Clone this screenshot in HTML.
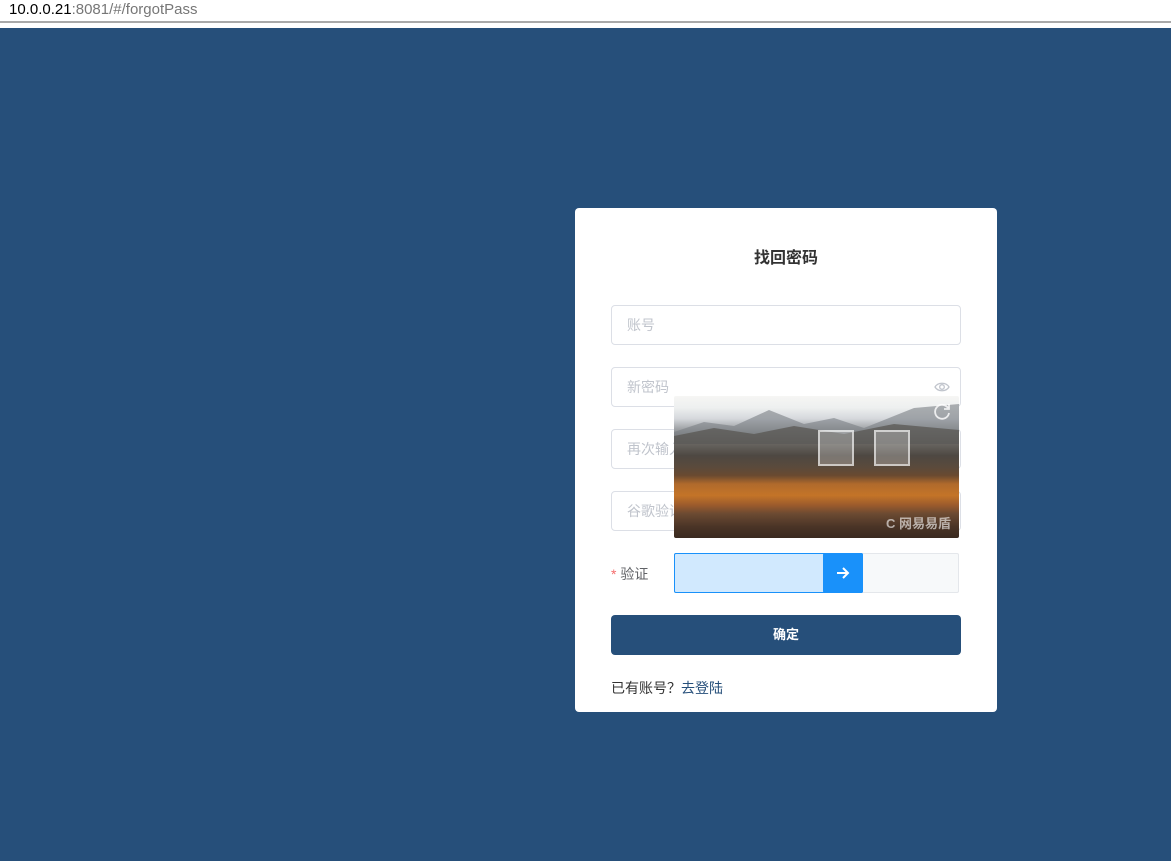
<!DOCTYPE html>
<html><head><meta charset="utf-8"><style>
*{box-sizing:border-box;margin:0;padding:0}
body{width:1171px;height:861px;overflow:hidden;background:#264f7a;font-family:"Liberation Sans","Noto Sans CJK SC",sans-serif;position:relative}
.bar{position:absolute;left:0;top:0;width:1171px;height:22px;background:#fff;border-bottom:1px solid #a9a9a9;font-size:15px;line-height:19px;padding-left:9px;color:#777}
.bar b{font-weight:normal;color:#000}
.bar2{position:absolute;top:22px;left:0;width:1171px;height:6px;background:#fff;border-top:1px solid #a9a9a9}
.card{position:absolute;left:575px;top:208px;width:422px;height:504px;background:#fff;border-radius:4px}
.title{position:absolute;top:36px;left:0;width:100%;text-align:center;font-size:16px;font-weight:bold;color:#333}
.inp{position:absolute;left:36px;width:350px;height:40px;border:1px solid #dcdfe6;border-radius:4px;font-size:14px;color:#c0c4cc;line-height:38px;padding-left:15px}
.img{position:absolute;left:99px;top:188px;width:285px;height:142px;border-radius:2px;overflow:hidden;
background:linear-gradient(180deg,#f6f6f4 0%,#eef0f0 8%,#d5d8dc 16%,#9a9da0 24%,#6c6a66 32%,#4e4842 42%,#5a4a3c 50%,#6a4a30 56%,#b06a2c 62%,#c47428 70%,#9a5a2c 77%,#6b4a32 83%,#4a3426 92%,#3a2a20 100%)}
.mt{position:absolute;left:0;top:8px;width:285px;height:40px}
.pz{position:absolute;width:36px;height:36px;border:2px solid rgba(255,255,255,.6);background:rgba(255,255,255,.25)}
.lab{position:absolute;left:36px;top:356px;font-size:14px;color:#606266}
.lab span{color:#f56c6c}
.sl{position:absolute;left:99px;top:345px;width:285px;height:40px;background:#f7f9fa;border:1px solid #e4e7eb;border-radius:2px}
.fill{position:absolute;left:-1px;top:-1px;width:189px;height:40px;background:#d1e9fe;border:1px solid #1991fa;border-radius:2px}
.knob{position:absolute;left:148px;top:-1px;width:40px;height:40px;background:#1991fa;border-radius:2px}
.btn{position:absolute;left:36px;top:407px;width:350px;height:40px;background:#264f7a;border-radius:4px;color:#fff;font-size:13px;font-weight:bold;text-align:center;line-height:40px}
.link{position:absolute;left:36px;top:470px;font-size:14px;color:#333;font-family:"Noto Sans CJK SC",sans-serif}
.link a{color:#264f7a;text-decoration:none}
</style></head><body>
<div class="bar"><b>10.0.0.21</b>:8081/#/forgotPass</div>
<div class="bar2"></div>
<div class="card">
<div class="title">找回密码</div>
<div class="inp" style="top:97px">账号</div>
<div class="inp" style="top:159px">新密码<svg style="position:absolute;right:10px;top:13px" width="16" height="12" viewBox="0 0 16 12"><path d="M1 6C4 1 12 1 15 6C12 11 4 11 1 6Z" fill="none" stroke="#c0c4cc" stroke-width="1.3"/><circle cx="8" cy="6" r="2.3" fill="none" stroke="#c0c4cc" stroke-width="1.3"/></svg></div>
<div class="inp" style="top:221px">再次输入</div>
<div class="inp" style="top:283px">谷歌验证</div>
<div class="img">
<svg class="mt" viewBox="0 0 285 40" preserveAspectRatio="none"><path d="M0 28L30 18L60 22L95 6L130 20L160 14L190 24L240 4L285 0V40H0Z" fill="#7a7e84" opacity=".6"/><path d="M0 32L40 24L80 30L120 22L170 30L220 20L285 26V40H0Z" fill="#55524e" opacity=".7"/></svg>
<div class="pz" style="left:144px;top:34px"></div>
<div class="pz" style="left:200px;top:34px"></div>
<svg style="position:absolute;right:7px;top:6px" width="20" height="20" viewBox="0 0 20 20"><path d="M16 6A7 7 0 1 0 17 11" fill="none" stroke="rgba(255,255,255,.8)" stroke-width="1.8"/><path d="M17 2V7H12" fill="none" stroke="rgba(255,255,255,.8)" stroke-width="1.8"/></svg>
<div style="position:absolute;right:8px;bottom:6px;color:rgba(255,255,255,.6);font-size:13px;font-weight:bold">C 网易易盾</div>
</div>
<div class="lab"><span>*</span> 验证</div>
<div class="sl"><div class="fill"></div><div class="knob"><svg style="position:absolute;left:13px;top:13px" width="14" height="14" viewBox="0 0 14 14"><path d="M1 7H12M7 2L12 7L7 12" fill="none" stroke="#fff" stroke-width="2"/></svg></div></div>
<div class="btn">确定</div>
<div class="link">已有账号？<a>去登陆</a></div>
</div>
</body></html>
